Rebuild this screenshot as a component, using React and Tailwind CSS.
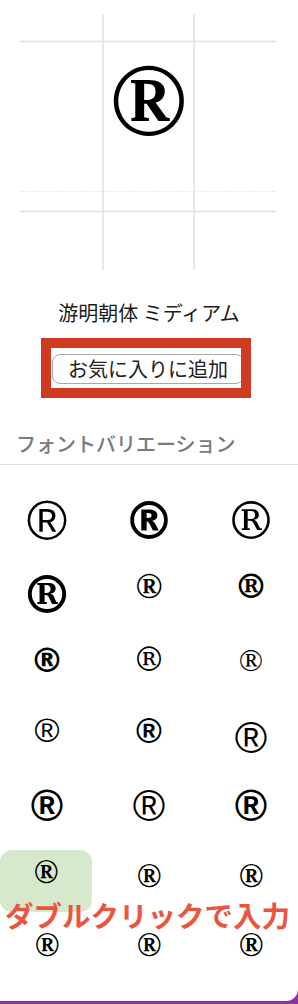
import React from 'react';

const JP = "font-['Noto_Sans_CJK_JP',sans-serif]";

// rows of font variations, each cell: font class, size class, extra alignment
const rows = [
  {
    h: 'h-[72px]',
    cells: [
      { f: "font-['Liberation_Sans'] text-[44px]", a: '' },
      { f: "font-['Liberation_Sans'] font-bold text-[44px]", a: '' },
      { f: "font-['Liberation_Sans'] text-[44px]", a: '' },
    ],
  },
  {
    h: 'h-[70px]',
    cells: [
      { f: "font-['Liberation_Sans'] text-[55px]", a: '' },
      { f: "font-['DejaVu_Sans'] font-bold text-[52px]", a: '' },
      { f: "font-['DejaVu_Serif'] text-[52px]", a: '' },
    ],
  },
  {
    h: 'h-[68px]',
    cells: [
      { f: "font-['DejaVu_Serif'] font-bold text-[53px]", a: 'pt-[8px]' },
      { f: "font-['Liberation_Serif'] font-bold text-[36px]", a: 'pb-[8px]' },
      { f: "font-['DejaVu_Serif'] font-bold text-[34px]", a: 'pb-[8px]' },
    ],
  },
  {
    h: 'h-[71px]',
    cells: [
      { f: "font-['DejaVu_Sans'] font-bold text-[34px]", a: '' },
      { f: "font-['DejaVu_Serif'] text-[33px]", a: '' },
      { f: "font-['Liberation_Serif'] text-[32px]", a: '' },
    ],
  },
  {
    h: 'h-[75px]',
    cells: [
      { f: "font-['Liberation_Sans'] text-[34px]", a: 'pb-[5px]' },
      { f: "font-['Liberation_Sans'] font-bold text-[35px]", a: 'pb-[5px]' },
      { f: "font-['Liberation_Sans'] text-[44px]", a: 'pt-[11px]' },
    ],
  },
  {
    h: 'h-[71px]',
    cells: [
      { f: "font-['Liberation_Sans'] font-bold text-[44px]", a: '' },
      { f: "font-['Liberation_Sans'] text-[44px]", a: '' },
      { f: "font-['Liberation_Sans'] font-bold text-[44px]", a: '' },
    ],
  },
  {
    h: 'h-[68px]',
    cells: [
      { f: "font-['Liberation_Serif'] font-bold text-[33px]", a: '', hl: true },
      { f: "font-['Liberation_Serif'] font-bold text-[33px]", a: '' },
      { f: "font-['Liberation_Serif'] font-bold text-[33px]", a: '' },
    ],
  },
  {
    h: 'h-[72px]',
    cells: [
      { f: "font-['Liberation_Serif'] font-bold text-[33px]", a: '' },
      { f: "font-['Liberation_Serif'] font-bold text-[33px]", a: '' },
      { f: "font-['Liberation_Serif'] font-bold text-[33px]", a: '' },
    ],
  },
];

function Cell({ cell }) {
  if (cell.hl) {
    return (
      <div className="flex items-start justify-start pt-[9px]">
        <div className="flex h-[62px] w-[92px] justify-center rounded-[12px] bg-[#d6e9cc] pt-[6px]">
          <span className={`${cell.f} leading-none text-black`}>®</span>
        </div>
      </div>
    );
  }
  return (
    <div className={`flex items-center justify-center ${cell.a}`}>
      <span className={`${cell.f} leading-none text-black`}>®</span>
    </div>
  );
}

export default function App() {
  return (
    <div className="h-[1004px] w-[298px] bg-[#8e30a8]">
      <div className="relative h-[1001px] w-[298px] overflow-hidden rounded-br-[12px] bg-white">
        {/* glyph preview with guides */}
        <div className="relative ml-[20px] mt-[14px] h-[256px] w-[256px]">
          <svg width="256" height="256" className="absolute inset-0">
            <line x1="0" y1="27.5" x2="256" y2="27.5" stroke="#e2e2e2" strokeWidth="1.5" />
            <line x1="0" y1="197.5" x2="256" y2="197.5" stroke="#e2e2e2" strokeWidth="1.5" />
            <line x1="0" y1="177.5" x2="256" y2="177.5" stroke="#e2e2e2" strokeWidth="1" strokeDasharray="1.5 1.5" />
            <line x1="83" y1="0" x2="83" y2="256" stroke="#e2e2e2" strokeWidth="1.5" />
            <line x1="174" y1="0" x2="174" y2="256" stroke="#e2e2e2" strokeWidth="1.5" />
          </svg>
          <div className="absolute left-0 right-0 top-[34px] flex justify-center">
            <span className="font-['Liberation_Serif'] text-[104px] font-bold leading-none text-black">®</span>
          </div>
        </div>

        <div className={`${JP} mt-[29px] text-center text-[20px] leading-[28px] text-[#1c1c1c]`}>
          游明朝体 ミディアム
        </div>

        <div className="ml-[41px] mt-[11px] h-[60px] w-[210px] overflow-hidden border-[10px] border-[#d03a22] bg-white">
          <button
            className={`${JP} ml-[1px] mt-[6px] flex h-[30px] w-[192px] items-center justify-center rounded-[8px] border-[1.5px] border-[#a8a8a8] bg-white text-[20px] leading-none text-[#222]`}
          >
            お気に入りに追加
          </button>
        </div>

        <div className={`${JP} mt-[32px] pl-[16px] text-[20px] font-medium leading-[28px] text-[#7a7a7a]`}>
          フォントバリエーション
        </div>

        <div className="mt-[6px] h-[536px] overflow-hidden border-t-[1.5px] border-[#dcdcdc]">
          <div className="-mt-[51px]">
            {rows.map((row, i) => (
              <div key={i} className={`grid grid-cols-[94px_110px_94px] ${row.h}`}>
                {row.cells.map((cell, j) => (
                  <Cell key={j} cell={cell} />
                ))}
              </div>
            ))}
          </div>
        </div>

        <div
          className={`${JP} absolute left-[5px] top-[898px] text-[28.5px] font-bold leading-[34px] whitespace-nowrap text-[#ea553f]`}
        >
          ダブルクリックで入力
        </div>
      </div>
    </div>
  );
}
